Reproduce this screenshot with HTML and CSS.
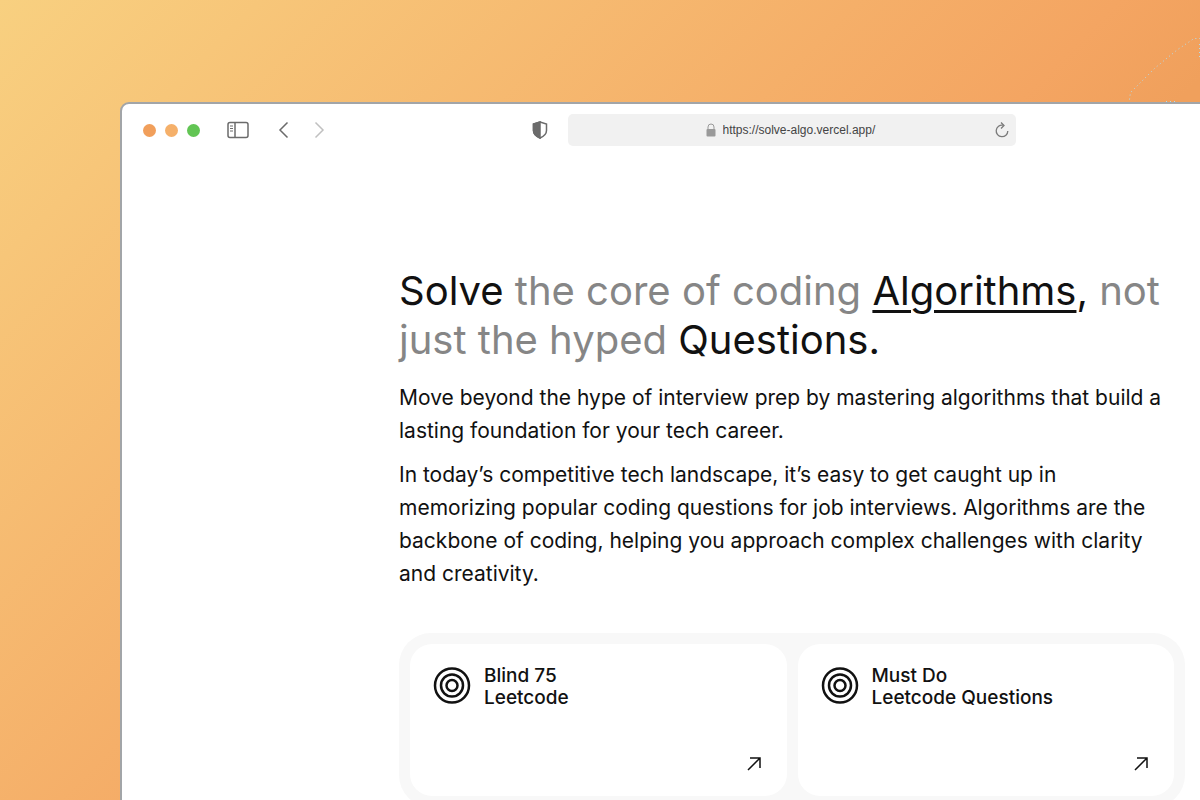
FILE: index.html
```html
<!DOCTYPE html>
<html lang="en">
<head>
  <meta charset="utf-8">
  <meta name="viewport" content="width=device-width, initial-scale=1">
  <title>Solve Algo</title>
  <link rel="stylesheet" href="styles.css">
</head>
<body>
  <svg class="trail" width="72" height="70" viewBox="0 0 72 70" aria-hidden="true">
    <path d="M1.5 67.5L2.5 60.5 27 36 49 18 66 6.500H72" />
    <path d="M38 69.500h9M71.500 12v16" />
  </svg>

  <div class="window">
    <header class="toolbar">
      <div class="toolbar-left">
        <div class="lights">
          <span class="light close"></span>
          <span class="light minimize"></span>
          <span class="light expand"></span>
        </div>
        <button class="icon-btn sidebar-btn" aria-label="Show sidebar">
          <svg width="22" height="18" viewBox="0 0 22 18">
            <rect x="1" y="1.5" width="20" height="15" rx="2" />
            <path d="M8 1.5v15" />
            <path class="thin" d="M3 5h3M3 7.5h3M3 10h3" />
          </svg>
        </button>
        <button class="icon-btn back-btn" aria-label="Back">
          <svg width="12" height="18" viewBox="0 0 12 18"><path d="M9.5 1.5L2 9l7.5 7.5" /></svg>
        </button>
        <button class="icon-btn forward-btn" aria-label="Forward" disabled>
          <svg width="12" height="18" viewBox="0 0 12 18"><path d="M2.5 1.5L10 9l-7.5 7.5" /></svg>
        </button>
        <button class="icon-btn shield-btn" aria-label="Privacy report">
          <svg width="16" height="18" viewBox="0 0 16 18">
            <path d="M8 1l6.5 2v6.5C14.5 13 11.5 15.5 8 17 4.5 15.5 1.5 13 1.5 9.5V3z" />
            <path class="fill" d="M8 1L1.5 3v6.5C1.5 13 4.5 15.5 8 17z" />
          </svg>
        </button>
      </div>
      <div class="address">
        <svg class="lock" width="10" height="14" viewBox="0 0 10 14">
          <path d="M2 7V4a3 3 0 0 1 6 0v3" />
          <rect x="0.5" y="6" width="9" height="7.5" rx="1" />
        </svg>
        <input class="url" type="text" aria-label="Address" value="https://solve-algo.vercel.app/">
        <button class="reload" aria-label="Reload">
          <svg width="14" height="16" viewBox="0 0 14 16">
            <path d="M8 3.2A5.8 5.8 0 1 0 12.8 9" />
            <path d="M6 0.5L9 3.5 6 6.5" />
          </svg>
        </button>
      </div>
    </header>

    <main class="content">
      <h1><strong>Solve</strong> the core of coding <strong><a href="#lists">Algorithms</a>,</strong> not just the hyped <strong>Questions.</strong></h1>
      <p>Move beyond the hype of interview prep by mastering algorithms that build a lasting foundation for your tech career.</p>
      <p>In today’s competitive tech landscape, it’s easy to get caught up in memorizing popular coding questions for job interviews. Algorithms are the backbone of coding, helping you approach complex challenges with clarity and creativity.</p>

      <div class="lists" id="lists">
        <a class="card" href="#blind-75">
          <svg class="target" width="38" height="38" viewBox="0 0 38 38">
            <circle cx="19" cy="18.5" r="17" />
            <circle cx="19" cy="18.5" r="11" />
            <circle cx="19" cy="18.5" r="5.5" />
          </svg>
          <h2>Blind 75<br>Leetcode</h2>
          <svg class="arrow" width="14" height="14" viewBox="0 0 14 14"><path d="M1 13L13 1M3 1h10v10" /></svg>
        </a>
        <a class="card" href="#must-do">
          <svg class="target" width="38" height="38" viewBox="0 0 38 38">
            <circle cx="19" cy="18.5" r="17" />
            <circle cx="19" cy="18.5" r="11" />
            <circle cx="19" cy="18.5" r="5.5" />
          </svg>
          <h2>Must Do<br>Leetcode Questions</h2>
          <svg class="arrow" width="14" height="14" viewBox="0 0 14 14"><path d="M1 13L13 1M3 1h10v10" /></svg>
        </a>
      </div>
    </main>
  </div>
</body>
</html>
```

FILE: styles.css
```css
* {
  box-sizing: border-box;
}

body {
  margin: 0;
  height: 100vh;
  overflow: hidden;
  font-family: Inter, "Liberation Sans", sans-serif;
  color: #111;
  background: linear-gradient(135deg, #f8d080 0%, #f4a562 56%, #f0a05c 64%);
}

svg {
  display: block;
  fill: none;
  stroke: currentColor;
}

button {
  padding: 0;
  border: none;
  background: none;
  color: inherit;
}

.trail {
  position: absolute;
  top: 32px;
  right: 0;
  color: #b4dcea;
  stroke-dasharray: 1 3;
}

/* browser window, runs off the right and bottom of the page */
.window {
  width: 112vw;
  min-height: 100vh;
  margin: 102px 0 0 10vw;
  border: 2px solid #a2a5a8;
  border-radius: 9px;
  background: #fff;
}

.toolbar {
  display: grid;
  grid-template-columns: 1fr 448px 1fr;
  align-items: center;
  padding-top: 10px;
}

.toolbar-left {
  display: flex;
  align-items: center;
  padding: 0 20px 0 21px;
  color: #6b6b6b;
}

.lights {
  display: flex;
  gap: 9px;
}

.light {
  width: 13px;
  height: 13px;
  border-radius: 50%;
}

.close {
  background: #f19f5b;
}

.minimize {
  background: #f5b06a;
}

.expand {
  background: #62c554;
}

.icon-btn svg {
  stroke-width: 1.5;
}

.icon-btn .thin {
  stroke-width: 1;
}

.icon-btn .fill {
  fill: currentColor;
}

.sidebar-btn {
  margin-left: 27px;
}

.back-btn {
  margin-left: 29px;
}

.forward-btn {
  margin-left: 23px;
  color: #c0c0c0;
}

.shield-btn {
  margin-left: auto;
}

.address {
  position: relative;
  display: flex;
  align-items: center;
  justify-content: center;
  gap: 7px;
  height: 32px;
  border-radius: 5px;
  background: #f1f1f1;
}

.lock {
  color: #999;
}

.lock rect {
  fill: currentColor;
  stroke: none;
}

.url {
  width: 156px;
  padding: 0;
  border: none;
  background: none;
  color: #444;
  font: 12px "Liberation Sans", Arial, sans-serif;
}

.reload {
  position: absolute;
  right: 7px;
  color: #7a7a7a;
}

.reload svg {
  stroke-width: 1.3;
}

.content {
  width: 786px;
  margin: 120px auto 0;
}

h1 {
  margin: 0 0 17px;
  font-size: 40px;
  line-height: 49px;
  font-weight: 400;
  color: #868686;
}

h1 strong {
  font-weight: 400;
  color: #111;
}

h1 a {
  color: inherit;
  text-decoration-thickness: 3px;
  text-underline-offset: 5px;
}

p {
  max-width: 770px;
  margin: 0 0 11px;
  font-size: 21px;
  line-height: 33px;
}

.lists {
  display: grid;
  grid-template-columns: 1fr 1fr;
  gap: 11px;
  margin-top: 43px;
  padding: 11px;
  border-radius: 32px;
  background: #f8f8f8;
}

.card {
  display: grid;
  grid-template-columns: 38px 1fr 14px;
  grid-template-rows: 1fr auto;
  column-gap: 13px;
  height: 152px;
  padding: 21px 26px 25px 23px;
  border-radius: 22px;
  background: #fff;
  color: #111;
  text-decoration: none;
}

.target {
  margin-top: 2px;
  stroke-width: 2.5;
}

.card h2 {
  margin: 0;
  font-size: 19px;
  line-height: 22px;
  font-weight: 500;
}

.arrow {
  grid-column: 3;
  grid-row: 2;
  stroke-width: 1.5;
}
```
